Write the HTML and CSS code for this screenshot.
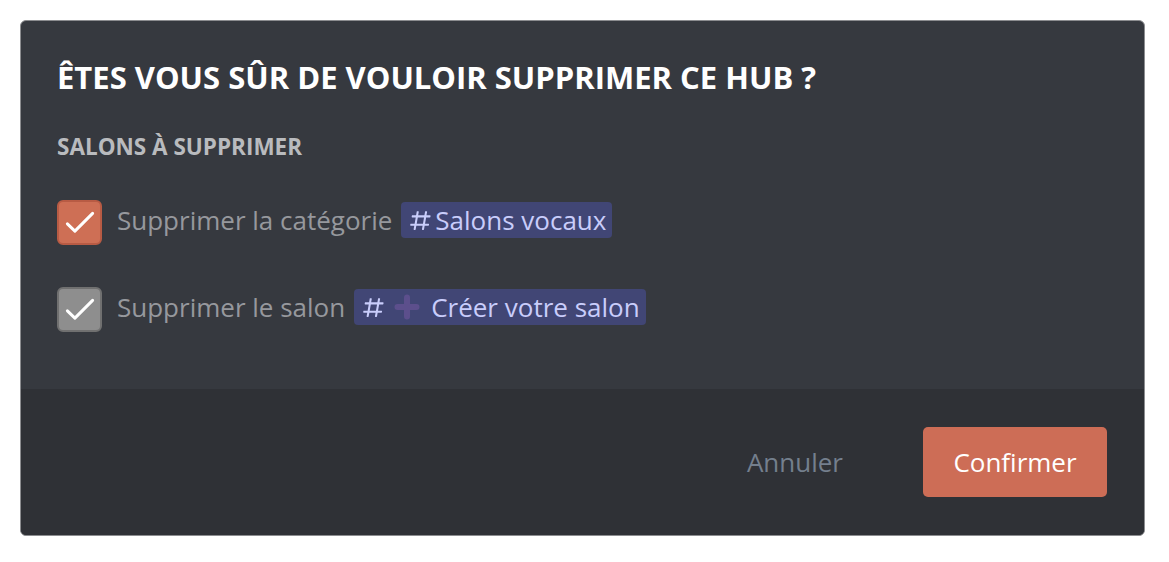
FILE: index.html
```html
<!DOCTYPE html>
<html lang="fr">
<head>
<meta charset="utf-8">
<link rel="stylesheet" href="styles.css">
</head>
<body>
<div class="modal">
  <div class="modal-body">
    <h1 class="title">Êtes vous sûr de vouloir supprimer ce hub ?</h1>
    <h2 class="section">Salons à supprimer</h2>
    <div class="options">
      <label class="option">
        <span class="box box-on">
          <svg viewBox="0 0 24 24" width="36" height="36"><path d="M3.6 12.6 L8.6 17.4 L20.4 5.6" fill="none" stroke="#fff" stroke-width="2" stroke-linecap="round" stroke-linejoin="round"/></svg>
        </span>
        <span class="label">Supprimer la catégorie
          <span class="mention"><svg class="hash" viewBox="0 0 24 24" width="24" height="24"><path fill="#c9cdfb" d="M5.88657 21C5.57547 21 5.3399 20.7189 5.39427 20.4126L6.00001 17H2.59511C2.28449 17 2.04905 16.7198 2.10259 16.4138L2.27759 15.4138C2.31946 15.1746 2.52722 15 2.77011 15H6.35001L7.41001 9H4.00511C3.69449 9 3.45905 8.71977 3.51259 8.41381L3.68759 7.41381C3.72946 7.17456 3.93722 7 4.18011 7H7.76001L8.39677 3.41262C8.43914 3.17391 8.64664 3 8.88907 3H9.87344C10.1845 3 10.4201 3.28107 10.3657 3.58738L9.76001 7H15.76L16.3968 3.41262C16.4391 3.17391 16.6466 3 16.8891 3H17.8734C18.1845 3 18.4201 3.28107 18.3657 3.58738L17.76 7H21.1649C21.4755 7 21.711 7.28023 21.6574 7.58619L21.4824 8.58619C21.4406 8.82544 21.2328 9 20.9899 9H17.41L16.35 15H19.7549C20.0655 15 20.301 15.2802 20.2474 15.5862L20.0724 16.5862C20.0306 16.8254 19.8228 17 19.5799 17H16L15.3632 20.5874C15.3209 20.8261 15.1134 21 14.8709 21H13.8866C13.5755 21 13.3399 20.7189 13.3943 20.4126L14 17H8.00001L7.36325 20.5874C7.32088 20.8261 7.11337 21 6.87094 21H5.88657ZM9.41045 9L8.35045 15H14.3504L15.4104 9H9.41045Z"/></svg>Salons vocaux</span>
        </span>
      </label>
      <label class="option">
        <span class="box box-grey">
          <svg viewBox="0 0 24 24" width="36" height="36"><path d="M3.6 12.6 L8.6 17.4 L20.4 5.6" fill="none" stroke="#fff" stroke-width="2" stroke-linecap="round" stroke-linejoin="round"/></svg>
        </span>
        <span class="label">Supprimer le salon
          <span class="mention"><svg class="hash" viewBox="0 0 24 24" width="24" height="24"><path fill="#c9cdfb" d="M5.88657 21C5.57547 21 5.3399 20.7189 5.39427 20.4126L6.00001 17H2.59511C2.28449 17 2.04905 16.7198 2.10259 16.4138L2.27759 15.4138C2.31946 15.1746 2.52722 15 2.77011 15H6.35001L7.41001 9H4.00511C3.69449 9 3.45905 8.71977 3.51259 8.41381L3.68759 7.41381C3.72946 7.17456 3.93722 7 4.18011 7H7.76001L8.39677 3.41262C8.43914 3.17391 8.64664 3 8.88907 3H9.87344C10.1845 3 10.4201 3.28107 10.3657 3.58738L9.76001 7H15.76L16.3968 3.41262C16.4391 3.17391 16.6466 3 16.8891 3H17.8734C18.1845 3 18.4201 3.28107 18.3657 3.58738L17.76 7H21.1649C21.4755 7 21.711 7.28023 21.6574 7.58619L21.4824 8.58619C21.4406 8.82544 21.2328 9 20.9899 9H17.41L16.35 15H19.7549C20.0655 15 20.301 15.2802 20.2474 15.5862L20.0724 16.5862C20.0306 16.8254 19.8228 17 19.5799 17H16L15.3632 20.5874C15.3209 20.8261 15.1134 21 14.8709 21H13.8866C13.5755 21 13.3399 20.7189 13.3943 20.4126L14 17H8.00001L7.36325 20.5874C7.32088 20.8261 7.11337 21 6.87094 21H5.88657ZM9.41045 9L8.35045 15H14.3504L15.4104 9H9.41045Z"/></svg><svg class="plus" viewBox="0 0 26 26" width="26" height="26"><path d="M13 3.5 V22.5 M3.5 13 H22.5" stroke="#5c4f8c" stroke-width="6" stroke-linecap="round"/></svg>Créer votre salon</span>
        </span>
      </label>
    </div>
  </div>
  <div class="modal-footer">
    <button class="btn btn-link">Annuler</button>
    <button class="btn btn-primary">Confirmer</button>
  </div>
</div>
</body>
</html>
```

FILE: styles.css
```css
html, body {
  margin: 0;
  padding: 0;
  background: #ffffff;
}
body {
  padding: 20px 24px 0 20px;
  font-family: "Open Sans", "Noto Sans", sans-serif;
}
.modal {
  width: 1123px;
  border: 1px solid #8c8d90;
  border-radius: 6px;
  overflow: hidden;
  background: #36393f;
}
.modal-body {
  padding: 36px 36px 57px 36px;
}
.title {
  margin: 0;
  font-size: 31px;
  line-height: 40px;
  font-weight: 700;
  text-transform: uppercase;
  color: #ffffff;
}
.section {
  margin: 35px 0 0 0;
  font-size: 22.5px;
  line-height: 30px;
  font-weight: 700;
  text-transform: uppercase;
  color: #b9bbbe;
}
.options {
  margin-top: 38px;
  display: flex;
  flex-direction: column;
  gap: 42px;
}
.option {
  display: flex;
  align-items: flex-start;
  gap: 15px;
  height: 45px;
}
.box {
  box-sizing: border-box;
  width: 45px;
  height: 45px;
  border-radius: 6px;
  display: flex;
  align-items: center;
  justify-content: center;
  flex: none;
}
.box-on {
  background: #ce6f55;
  border: 2px solid #b85b44;
}
.box-grey {
  background: #8e8e8e;
  border: 2px solid #707070;
}
.label {
  display: flex;
  align-items: flex-start;
  gap: 9px;
  margin-top: 2px;
  font-size: 26px;
  line-height: 36px;
  color: #96989d;
  white-space: nowrap;
}
.mention {
  display: inline-flex;
  align-items: center;
  background: #414675;
  color: #c9cdfb;
  border-radius: 4px;
  padding: 0 6px 0 7px;
  height: 36px;
}
.hash {
  flex: none;
  width: 25px;
  height: 25px;
  margin-right: 2px;
}
.plus {
  flex: none;
  margin: 0 11px 0 6px;
}
.modal-footer {
  background: #2f3136;
  display: flex;
  justify-content: flex-end;
  align-items: center;
  gap: 50px;
  padding: 38px 37px 38px 36px;
}
.btn {
  font-family: "Open Sans", "Noto Sans", sans-serif;
  font-size: 26px;
  height: 70px;
  padding: 0 30px;
  border: none;
  border-radius: 5px;
  cursor: pointer;
}
.btn-link {
  background: transparent;
  color: #747f8d;
}
.btn-primary {
  background: #cd6d56;
  color: #ffffff;
  width: 184px;
}
```
